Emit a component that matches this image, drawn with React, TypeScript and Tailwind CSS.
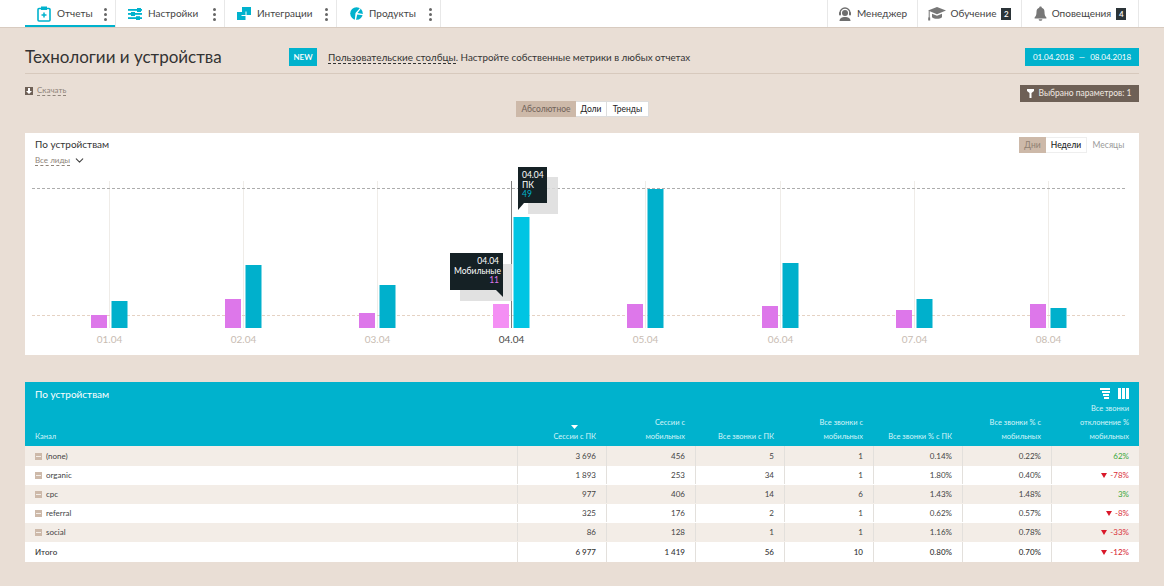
import { ChevronDown } from "lucide-react";

const font = { fontFamily: 'Lato, "Noto Sans", sans-serif' };

const chartDays = [
  { label: "01.04", x: 109, pink: 315, blue: 301 },
  { label: "02.04", x: 243, pink: 299, blue: 265 },
  { label: "03.04", x: 377, pink: 313, blue: 285 },
  { label: "04.04", x: 511, pink: 304, blue: 217, active: true },
  { label: "05.04", x: 645, pink: 304, blue: 189 },
  { label: "06.04", x: 780, pink: 306, blue: 263 },
  { label: "07.04", x: 914, pink: 310, blue: 299 },
  { label: "08.04", x: 1048, pink: 304, blue: 308 },
];

const rows = [
  { name: "(none)", cells: ["3 696", "456", "5", "1", "0.14%", "0.22%"], diff: "62%", up: true },
  { name: "organic", cells: ["1 893", "253", "34", "1", "1.80%", "0.40%"], diff: "-78%" },
  { name: "cpc", cells: ["977", "406", "14", "6", "1.43%", "1.48%"], diff: "3%", up: true },
  { name: "referral", cells: ["325", "176", "2", "1", "0.62%", "0.57%"], diff: "-8%" },
  { name: "social", cells: ["86", "128", "1", "1", "1.16%", "0.78%"], diff: "-33%" },
];
const total = ["6 977", "1 419", "56", "10", "0.80%", "0.70%"];

const gridCols = "grid grid-cols-[492px_89px_89px_89px_89px_89px_89px_88px]";

function Dots() {
  return (
    <span className="flex flex-col gap-[2px]">
      <span className="h-[3px] w-[3px] rounded-full bg-[#666]" />
      <span className="h-[3px] w-[3px] rounded-full bg-[#666]" />
      <span className="h-[3px] w-[3px] rounded-full bg-[#666]" />
    </span>
  );
}

function ReportIcon() {
  return (
    <svg width="14" height="16" viewBox="0 0 14 16" fill="none">
      <rect x="1" y="2.500" width="12" height="12.500" rx="1" stroke="#00b2cd" strokeWidth="1.600" />
      <rect x="4" y="0.500" width="6" height="3.500" fill="#00b2cd" />
      <path d="M7 6.500v5M4.500 9h5" stroke="#00b2cd" strokeWidth="1.500" />
    </svg>
  );
}

function SettingsIcon() {
  return (
    <svg width="14" height="12" viewBox="0 0 14 12" fill="#00b2cd">
      <rect x="0" y="1" width="14" height="1.800" />
      <rect x="0" y="5" width="14" height="1.800" />
      <rect x="0" y="9.200" width="14" height="1.800" />
      <rect x="9" y="0" width="4" height="4" />
      <rect x="3" y="4" width="4" height="4" />
      <rect x="8" y="8.200" width="4" height="3.800" />
    </svg>
  );
}

function IntegrationIcon() {
  return (
    <svg width="14" height="13" viewBox="0 0 14 13" fill="#00b2cd">
      <rect x="0" y="5" width="8.500" height="8" />
      <rect x="5" y="0" width="9" height="8" />
      <path d="M4.500 8.500h4.500V4.500" fill="none" stroke="#fff" strokeWidth="1" />
    </svg>
  );
}

function ProductIcon() {
  return (
    <svg width="13" height="13" viewBox="0 0 13 13" fill="#00b2cd">
      <circle cx="6.500" cy="6.500" r="6.300" />
      <path d="M5.500 6 10 1l.8.700L7.500 6l5.500 1v1.200L7.200 7.500 6 13H4.800L5.500 6Z" fill="#fff" />
    </svg>
  );
}

function ManagerIcon() {
  return (
    <svg width="14" height="14" viewBox="0 0 14 14" fill="#6f6f6f">
      <path d="M2 6a5 5 0 0 1 10 0" fill="none" stroke="#6f6f6f" strokeWidth="1.300" />
      <circle cx="7" cy="6" r="3" />
      <rect x="1" y="5" width="2" height="3.400" rx="1" />
      <rect x="11" y="5" width="2" height="3.400" rx="1" />
      <path d="M1.500 14c0-2.600 2.400-4 5.500-4s5.500 1.400 5.500 4Z" />
    </svg>
  );
}

function EducationIcon() {
  return (
    <svg width="18" height="15" viewBox="0 0 18 15" fill="#777">
      <path d="M9 1 18 4.600 9 8.200 0 4.600Z" />
      <path d="M4 7.800 9 9.800l5-2v3.400c-1.300 1.100-3 1.600-5 1.600s-3.700-.5-5-1.600Z" />
      <rect x="0.700" y="5" width="1" height="7" />
      <rect x="0.200" y="11.500" width="2" height="3" />
    </svg>
  );
}

function BellIcon() {
  return (
    <svg width="13" height="15" viewBox="0 0 13 15" fill="#777">
      <path d="M6.500 0.500c.8 0 1.300.5 1.300 1.200 2 .6 2.700 2.200 2.700 4.300 0 3 .7 4.300 1.900 5.500v1H.600v-1C1.800 10.300 2.500 9 2.500 6c0-2.100.7-3.700 2.700-4.300 0-.7.500-1.200 1.300-1.200Z" />
      <path d="M4.700 13.300h3.600c0 1-.8 1.500-1.800 1.500s-1.800-.5-1.800-1.500Z" />
    </svg>
  );
}

function Tab({ icon, label, active, width }: { icon: React.ReactNode; label: string; active?: boolean; width: string }) {
  return (
    <div className={`relative flex h-full items-center border-r border-[#e8e8e8] pl-[12px] ${width}`}>
      <span className="flex w-[14px] justify-center">{icon}</span>
      <span className="ml-[6px] text-[10px] text-[#444]">{label}</span>
      <span className="absolute right-[8px] top-[8px]"><Dots /></span>
      {active && <span className="absolute inset-x-0 bottom-0 h-[2px] bg-[#00b2cd]" />}
    </div>
  );
}

function RightTab({ icon, label, badge, width }: { icon: React.ReactNode; label: string; badge?: string; width: string }) {
  return (
    <div className={`flex h-full items-center justify-center gap-[5px] border-l border-[#e8e8e8] ${width}`}>
      {icon}
      <span className="text-[10px] text-[#444]">{label}</span>
      {badge && (
        <span className="flex h-[12px] w-[10px] items-center justify-center bg-[#2b3438] text-[8px] font-semibold text-white">
          {badge}
        </span>
      )}
    </div>
  );
}

function Segment({ label, className }: { label: string; className: string }) {
  return <span className={`flex h-full items-center justify-center text-[8.500px] ${className}`}>{label}</span>;
}

function Chart() {
  return (
    <svg className="block" width="1114" height="185" viewBox="25 170 1114 185" style={font}>
      {chartDays.map((d) => (
        <line key={d.x} x1={d.x + 0.5} x2={d.x + 0.5} y1="181" y2="328" stroke={d.active ? "#7d7d7d" : "#efece8"} />
      ))}
      <line x1="32" x2="1126" y1="188.500" y2="188.500" stroke="#adadad" strokeDasharray="3 2" />
      <line x1="32" x2="1126" y1="315.500" y2="315.500" stroke="#e5d2c3" strokeDasharray="3 2" />
      {chartDays.map((d) => (
        <g key={d.label}>
          <rect x={d.x - 18} y={d.pink} width="16" height={328 - d.pink} fill={d.active ? "#f48ff4" : "#dd77ea"} />
          <rect x={d.x + 2.500} y={d.blue} width="16" height={328 - d.blue} fill={d.active ? "#00c5e3" : "#00b0cc"} />
          <text
            x={d.x + 0.500}
            y="343"
            textAnchor="middle"
            fontSize="10"
            fill={d.active ? "#4a4a4a" : "#c8bcb2"}
          >
            {d.label}
          </text>
        </g>
      ))}
      <rect x="460" y="264" width="52" height="37" fill="#dcdcdc" opacity="0.85" />
      <rect x="528" y="177" width="30" height="37" fill="#dcdcdc" opacity="0.85" />
      <path d="M496 290h7v7Z" fill="#152125" />
      <path d="M518 203h6l-6 7Z" fill="#152125" />
    </svg>
  );
}

function Tooltip({ className, lines, color, value }: { className: string; lines: string[]; color: string; value: string }) {
  return (
    <div className={`absolute bg-[#152125] px-[4px] py-[4px] text-[8.500px] leading-[9.500px] text-white ${className}`}>
      {lines.map((l) => (
        <div key={l}>{l}</div>
      ))}
      <div className={color}>{value}</div>
    </div>
  );
}

export default function App() {
  return (
    <div className="h-[586px] w-[1164px] overflow-hidden bg-[#e9ded5]" style={font}>
      <header className="flex h-[28px] justify-between border-b border-[#d8cbc0] bg-white pl-[25px] pr-[25px]">
        <nav className="flex">
          <Tab icon={<ReportIcon />} label="Отчеты" active width="w-[91px]" />
          <Tab icon={<SettingsIcon />} label="Настройки" width="w-[109px]" />
          <Tab icon={<IntegrationIcon />} label="Интеграции" width="w-[112px]" />
          <Tab icon={<ProductIcon />} label="Продукты" width="w-[104px]" />
        </nav>
        <nav className="flex border-r border-[#e8e8e8]">
          <RightTab icon={<ManagerIcon />} label="Менеджер" width="w-[90px]" />
          <RightTab icon={<EducationIcon />} label="Обучение" badge="2" width="w-[104px]" />
          <RightTab icon={<BellIcon />} label="Оповещения" badge="4" width="w-[117px]" />
        </nav>
      </header>

      <main className="px-[25px]">
        <div className="flex h-[46px] items-center border-b border-[#d7c9bd] pt-[13px]">
          <h1 className="w-[264px] text-[17px] font-normal text-[#333]">Технологии и устройства</h1>
          <span className="flex h-[18px] w-[28px] items-center justify-center bg-[#00b2cd] text-[8px] font-semibold text-white">
            NEW
          </span>
          <p className="ml-[11px] text-[10px] text-[#333]">
            <span className="border-b border-dashed border-[#333]">Пользовательские столбцы</span>
            <span className="text-[9.800px]">. Настройте собственные метрики в любых отчетах</span>
          </p>
          <span className="ml-auto flex h-[18px] w-[114px] items-center justify-center gap-[5px] bg-[#00b2cd] text-[8px] text-white">
            <span>01.04.2018</span>
            <span>—</span>
            <span>08.04.2018</span>
          </span>
        </div>

        <div className="relative h-[59px]">
          <div className="absolute left-0 top-[12px] flex items-center gap-[4px]">
            <span className="flex h-[8px] w-[8px] items-center justify-center bg-[#6e6056]">
              <svg width="6" height="6" viewBox="0 0 6 6" fill="#fff">
                <path d="M2 0h2v3h2L3 6 0 3h2Z" />
              </svg>
            </span>
            <span className="border-b border-dashed border-[#8f8479] text-[8px] leading-[9px] text-[#8f8479]">Скачать</span>
          </div>
          <div className="absolute right-0 top-[11px] flex h-[17px] w-[119px] items-center justify-center gap-[4px] bg-[#6e6056] text-[8.500px] text-[#f1e9e2]">
            <svg width="7" height="9" viewBox="0 0 7 9" fill="#fff">
              <path d="M0 0h7v2L4.500 4v5h-2V4L0 2Z" />
            </svg>
            Выбрано параметров: 1
          </div>
          <div className="absolute left-[491px] top-[27px] flex h-[16px] w-[133px] bg-white">
            <Segment label="Абсолютное" className="w-[60px] bg-[#cdb9a9] text-[#6f6259]" />
            <Segment label="Доли" className="w-[31px] border-y border-r border-[#ddd] text-[#222]" />
            <Segment label="Тренды" className="w-[42px] border-y border-r border-[#ddd] text-[#222]" />
          </div>
        </div>

        <section className="relative h-[222px] bg-white">
          <div className="flex items-start justify-between pl-[10px] pr-[9px] pt-[4px]">
            <div>
              <h2 className="text-[10px] font-normal leading-[15px] text-[#333]">По устройствам</h2>
              <div className="mt-[2px] flex items-center gap-[3px]">
                <span className="border-b border-dashed border-[#8f8479] text-[8px] leading-[9px] text-[#8f8479]">Все лиды</span>
                <ChevronDown className="h-[13px] w-[13px] text-[#444]" strokeWidth={2} />
              </div>
            </div>
            <div className="flex h-[16px]">
              <Segment label="Дни" className="w-[27px] bg-[#cdb9a9] text-[#8f8072]" />
              <Segment label="Недели" className="w-[41px] border-y border-r border-[#eee] font-medium text-[#222]" />
              <Segment label="Месяцы" className="w-[43px] text-[#9a9a9a]" />
            </div>
          </div>
          <div className="absolute bottom-0 left-0">
            <Chart />
          </div>
          <Tooltip
            className="left-[425px] top-[120px] h-[37px] w-[53px] text-right"
            lines={["04.04", "Мобильные"]}
            color="text-[#dd77ea]"
            value="11"
          />
          <Tooltip
            className="left-[493px] top-[34px] h-[36px] w-[29px]"
            lines={["04.04", "ПК"]}
            color="text-[#00b2cd]"
            value="49"
          />
        </section>

        <section className="mt-[27px] bg-white">
          <div className="h-[64px] bg-[#00b2cd] text-white">
            <div className="flex h-[20px] items-start justify-between pl-[10px] pr-[10px] pt-[6px]">
              <h2 className="text-[10px] font-normal leading-[12px]">По устройствам</h2>
              <div className="flex items-center gap-[8px]">
                <svg width="10" height="11" viewBox="0 0 10 11" fill="#fff">
                  <rect x="0" y="0" width="10" height="2" />
                  <rect x="2" y="3" width="8" height="2" />
                  <rect x="3" y="6" width="6" height="2" />
                  <rect x="4" y="9" width="5" height="2" />
                </svg>
                <svg width="11" height="11" viewBox="0 0 11 11" fill="#fff">
                  <rect x="0" y="0" width="3" height="11" />
                  <rect x="4" y="0" width="3" height="11" />
                  <rect x="8" y="0" width="3" height="11" />
                </svg>
              </div>
            </div>
            <div className={`${gridCols} h-[42px] items-end text-[7.500px] leading-[14px] text-[#d5f4f9]`}>
              <div className="pl-[10px]">Канал</div>
              <div className="pr-[10px] text-right">
                <svg className="ml-auto mr-[18px] mb-[1px]" width="7" height="4" viewBox="0 0 7 4" fill="#fff">
                  <path d="M0 0h7L3.500 4Z" />
                </svg>
                Сессии с ПК
              </div>
              <div className="pr-[10px] text-right">Сессии с<br />мобильных</div>
              <div className="pr-[10px] text-right">Все звонки с ПК</div>
              <div className="pr-[10px] text-right">Все звонки с<br />мобильных</div>
              <div className="pr-[10px] text-right">Все звонки % с ПК</div>
              <div className="pr-[10px] text-right">Все звонки % с<br />мобильных</div>
              <div className="pr-[10px] text-right">Все звонки<br />отклонение %<br />мобильных</div>
            </div>
          </div>
          {rows.map((r, i) => (
            <div
              key={r.name}
              className={`${gridCols} items-center text-[8px] text-[#444] ${i === 0 ? "h-[20px]" : "h-[19px] pb-[1px]"} ${i % 2 === 0 ? "bg-[#f3ede7]" : "bg-white"}`}
            >
              <div className="flex items-center gap-[4px] pl-[10px]">
                <span className="flex h-[7px] w-[7px] items-center justify-center bg-[#cdb9a9]">
                  <span className="h-px w-[5px] bg-[#f3ede7]" />
                </span>
                {r.name}
              </div>
              {r.cells.map((c, j) => (
                <div key={j} className="flex h-full items-center justify-end border-l border-[#e3e0dc] pr-[10px]">
                  {c}
                </div>
              ))}
              <div
                className={`flex h-full items-center justify-end gap-[3px] border-l border-[#e3e0dc] pr-[10px] ${
                  r.up ? "text-[#3aa83a]" : "text-[#d9303a]"
                }`}
              >
                {!r.up && (
                  <svg width="6" height="5" viewBox="0 0 6 5" fill="#d9182a">
                    <path d="M0 0h6L3 5Z" />
                  </svg>
                )}
                {r.diff}
              </div>
            </div>
          ))}
          <div className={`${gridCols} h-[20px] items-center text-[8px] font-medium text-[#333]`}>
            <div className="pl-[10px]">Итого</div>
            {total.map((c) => (
              <div key={c} className="flex h-full items-center justify-end border-l border-[#e3e0dc] pr-[10px]">
                {c}
              </div>
            ))}
            <div className="flex h-full items-center justify-end gap-[3px] border-l border-[#e3e0dc] pr-[10px] text-[#d9303a]">
              <svg width="6" height="5" viewBox="0 0 6 5" fill="#d9182a">
                <path d="M0 0h6L3 5Z" />
              </svg>
              -12%
            </div>
          </div>
        </section>
      </main>
    </div>
  );
}
